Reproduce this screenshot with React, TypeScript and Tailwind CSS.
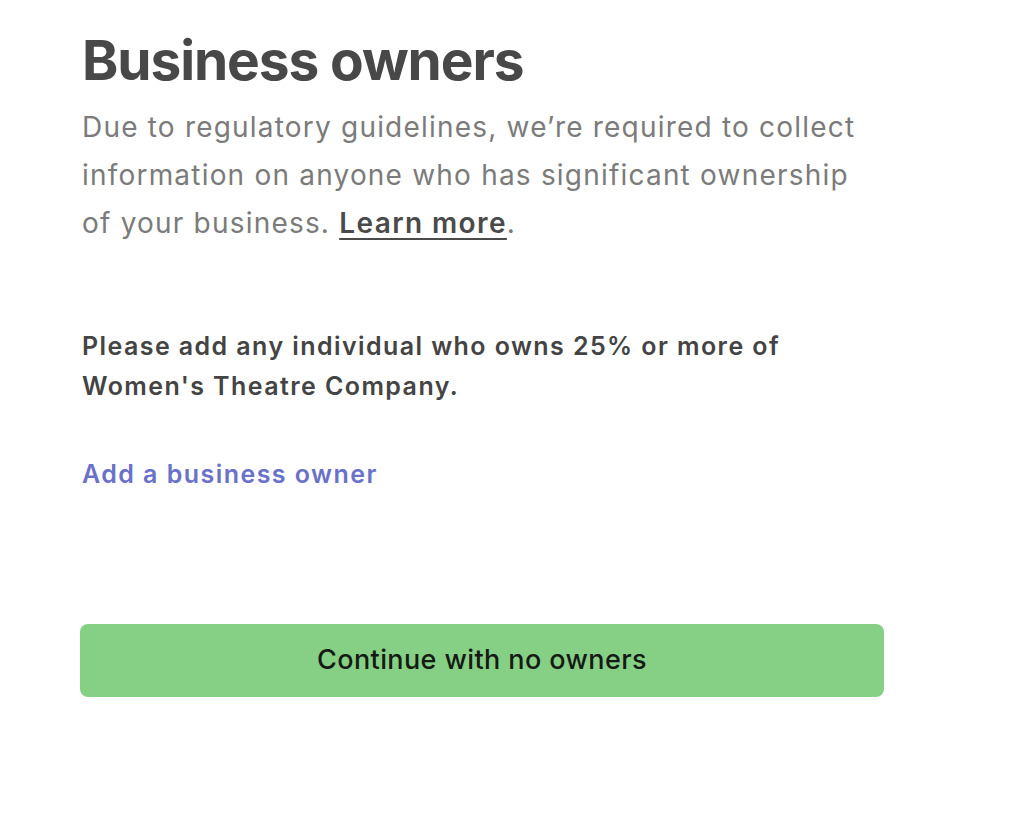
export default function App() {
  return (
    <div className="min-h-[822px] w-[1012px] bg-white" style={{ fontFamily: 'Inter, "Noto Sans", sans-serif' }}>
      <div className="box-content flex w-[804px] flex-col pl-[80px] pt-[24px]">
        <h1 className="pl-[2px] text-[55px] font-bold leading-[72px] tracking-[-1.1px] text-[#484848]">Business owners</h1>
        <p className="mt-[7px] w-[790px] pl-[2px] text-[28px] leading-[48px] tracking-[1.2px] text-[#7b7b7b]">
          Due to regulatory guidelines, we’re required to collect information on anyone who has significant ownership
          of your business.{' '}
          <a
            href="#"
            className="font-semibold tracking-[1.4px] text-[#4a4a4a] underline decoration-2 underline-offset-[5px]"
          >
            Learn more
          </a>
          .
        </p>
        <p className="mt-[79px] w-[720px] pl-[2px] text-[25px] font-semibold leading-[40px] tracking-[1.42px] text-[#444444]">
          Please add any individual who owns 25% or more of Women's Theatre Company.
        </p>
        <a href="#" className="mt-[51px] pl-[2px] text-[25px] font-semibold leading-[34px] tracking-[1.45px] text-[#6a71c8]">
          Add a business owner
        </a>
        <button className="mt-[133px] h-[73px] w-[804px] rounded-[8px] bg-[#86d085] text-[27px] font-medium tracking-[0.4px] text-[#151a14]">
          Continue with no owners
        </button>
      </div>
    </div>
  )
}
